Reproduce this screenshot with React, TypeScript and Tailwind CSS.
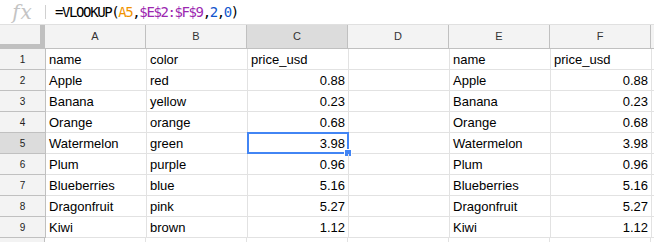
import React from "react";

const rows: [string, string, string, string, string][] = [
  ["name", "color", "price_usd", "name", "price_usd"],
  ["Apple", "red", "0.88", "Apple", "0.88"],
  ["Banana", "yellow", "0.23", "Banana", "0.23"],
  ["Orange", "orange", "0.68", "Orange", "0.68"],
  ["Watermelon", "green", "3.98", "Watermelon", "3.98"],
  ["Plum", "purple", "0.96", "Plum", "0.96"],
  ["Blueberries", "blue", "5.16", "Blueberries", "5.16"],
  ["Dragonfruit", "pink", "5.27", "Dragonfruit", "5.27"],
  ["Kiwi", "brown", "1.12", "Kiwi", "1.12"],
];

const cols = ["A", "B", "C", "D", "E", "F"];

function Cell({ text, right, sel }: { text: string; right?: boolean; sel?: boolean }) {
  return (
    <div
      className={`relative w-[101px] shrink-0 h-full border-r border-[#e2e2e2] flex items-center px-[3px] ${
        right ? "justify-end" : "justify-start"
      }`}
    >
      <span className="text-[13px] text-black leading-none">{text}</span>
      {sel && (
        <div className="absolute left-[-1px] top-[-1px] w-[102px] h-[22px] border-2 border-[#4285f4]">
          <div className="absolute right-[-5px] bottom-[-5px] w-[6px] h-[6px] bg-[#4285f4] border border-white box-content" />
        </div>
      )}
    </div>
  );
}

export default function App() {
  return (
    <div
      className="w-[654px] h-[242px] overflow-hidden bg-white"
      style={{ fontFamily: '"Liberation Sans", Arial, sans-serif' }}
    >
      {/* formula bar */}
      <div className="h-[25px] border-b border-[#e0e0e0] flex items-center">
        <div className="w-[45px] h-full flex items-center justify-center">
          <span
            className="text-[20px] italic text-[#c4c4c4] leading-[20px] tracking-[1px]"
            style={{ fontFamily: '"DejaVu Serif", "Liberation Serif", serif' }}
          >
            fx
          </span>
        </div>
        <div className="w-px h-[14px] bg-[#d0d0d0]" />
        <div
          className="pl-[9px] text-[14px] text-black leading-none"
          style={{ fontFamily: '"DejaVu Sans Mono", "Liberation Mono", monospace', letterSpacing: "-1.4px" }}
        >
          =VLOOKUP(<span className="text-[#f09300]">A5</span>,
          <span className="text-[#9c27b0]">$E$2:$F$9</span>,<span className="text-[#1155cc]">2</span>,
          <span className="text-[#1155cc]">0</span>)
        </div>
      </div>

      {/* column headers */}
      <div className="flex h-[24px] border-b border-[#c0c0c0] bg-[#f3f3f3]">
        <div className="w-[45px] shrink-0 h-full relative border-r border-[#c0c0c0]">
          <div className="absolute right-0 top-0 w-[4px] h-full bg-[#c0c0c0]" />
          <div className="absolute left-0 bottom-0 w-full h-[4px] bg-[#c0c0c0]" />
        </div>
        {cols.map((c) => (
          <div
            key={c}
            className={`w-[101px] shrink-0 h-full border-r border-[#c0c0c0] flex items-center justify-center text-[11px] text-[#333] ${
              c === "C" ? "bg-[#dcdcdc]" : ""
            }`}
          >
            {c}
          </div>
        ))}
        <div className="flex-1" />
      </div>

      {/* rows */}
      {rows.map((r, i) => (
        <div key={i} className="flex h-[21px] border-b border-[#e2e2e2]">
          <div
            className={`w-[45px] shrink-0 h-full border-r border-[#c0c0c0] flex items-center justify-center text-[10px] text-[#222] ${
              i === 4 ? "bg-[#dcdcdc]" : "bg-[#f3f3f3]"
            } border-b border-b-[#c0c0c0] box-content -mb-px`}
          >
            {i + 1}
          </div>
          <Cell text={r[0]} />
          <Cell text={r[1]} />
          <Cell text={r[2]} right={i > 0} sel={i === 4} />
          <Cell text="" />
          <Cell text={r[3]} />
          <Cell text={r[4]} right={i > 0} />
          <div className="flex-1" />
        </div>
      ))}
      <div className="flex h-[10px]">
        <div className="w-[45px] shrink-0 h-full border-r border-[#c0c0c0] bg-[#f3f3f3]" />
        {cols.map((c) => (
          <div key={c} className="w-[101px] shrink-0 h-full border-r border-[#e2e2e2]" />
        ))}
      </div>
    </div>
  );
}
